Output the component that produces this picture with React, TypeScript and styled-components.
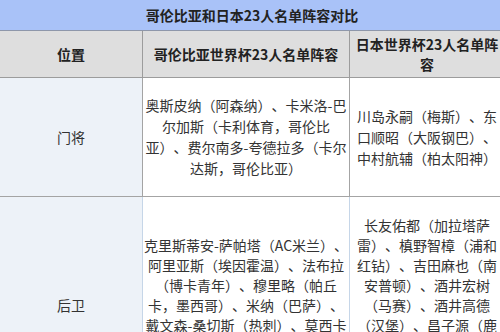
import React from "react";
import styled, { createGlobalStyle } from "styled-components";

const GlobalStyle = createGlobalStyle`
  html, body {
    margin: 0;
    padding: 0;
    background: #ffffff;
    overflow: hidden;
  }
  body {
    width: 500px;
    height: 332px;
    font-family: "Noto Sans CJK SC", "Noto Sans", sans-serif;
    color: #333;
    text-spacing-trim: space-all;
  }
`;

const rows = [
  {
    pos: "门将",
    col: "奥斯皮纳（阿森纳）、卡米洛-巴尔加斯（卡利体育，哥伦比亚）、费尔南多-夸德拉多（卡尔达斯，哥伦比亚）",
    jpn: "川岛永嗣（梅斯）、东口顺昭（大阪钢巴）、中村航辅（柏太阳神）",
    lh: 21,
    pad: 17,
    light: false,
  },
  {
    pos: "后卫",
    col: "克里斯蒂安-萨帕塔（AC米兰）、阿里亚斯（埃因霍温）、法布拉（博卡青年）、穆里略（帕丘卡，墨西哥）、米纳（巴萨）、戴文森-桑切斯（热刺）、莫西卡（赫罗纳）、法里德-迪亚斯（奥林匹亚）",
    jpn: "长友佑都（加拉塔萨雷）、槙野智樟（浦和红钻）、吉田麻也（南安普顿）、酒井宏树（马赛）、酒井高德（汉堡）、昌子源（鹿岛鹿角）、远藤航（浦和红钻）、植田直通（鹿岛鹿角）",
    lh: 20,
    pad: 18,
    light: true,
  },
];

export default function App() {
  return (
    <>
      <GlobalStyle />
      <Wrapper>
        <Title>哥伦比亚和日本23人名单阵容对比</Title>
        <Table>
          <colgroup>
            <col style={{ width: 143 }} />
            <col style={{ width: 207 }} />
            <col style={{ width: 154 }} />
          </colgroup>
          <thead>
            <tr>
              <Head>位置</Head>
              <Head>哥伦比亚世界杯23人名单阵容</Head>
              <Head>日本世界杯23人名单阵容</Head>
            </tr>
          </thead>
          <tbody>
            {rows.map((r) => (
              <tr key={r.pos}>
                <PosCell $light={r.light}>{r.pos}</PosCell>
                <Cell $lh={r.lh} $pad={r.pad} $side={0} $light={r.light}>
                  {r.col}
                </Cell>
                <Cell $lh={r.lh} $pad={r.pad} $side={2} $light={r.light}>
                  {r.jpn}
                </Cell>
              </tr>
            ))}
          </tbody>
        </Table>
      </Wrapper>
    </>
  );
}

const Wrapper = styled.div`
  width: 504px;
`;

const Title = styled.div`
  height: 30px;
  line-height: 30px;
  background: #a9c2f8;
  border-bottom: 1px solid #8e97aa;
  text-align: center;
  font-size: 14px;
  font-weight: 700;
  color: #222;
`;

const Table = styled.table`
  width: 504px;
  table-layout: fixed;
  border-collapse: separate;
  border-spacing: 0;
  font-size: 14px;
`;

const Head = styled.th`
  background: #dedede;
  padding: 3px 2px;
  line-height: 20px;
  font-weight: 700;
  font-size: 14px;
  color: #222;
  text-align: center;
  vertical-align: middle;
  border-bottom: 1px solid #9c9c9c;
  border-right: 1px solid #9c9c9c;
  &:last-child {
    border-right: none;
  }
`;

const Cell = styled.td<{ $lh: number; $pad: number; $side?: number; $light: boolean }>`
  padding: ${(p) => p.$pad}px ${(p) => p.$side ?? 2}px;
  line-height: ${(p) => p.$lh}px;
  text-align: center;
  vertical-align: middle;
  color: #333;
  border-bottom: 1px solid #a4a4a4;
  border-right: 1px solid ${(p) => (p.$light ? "#c6d6e8" : "#a4a4a4")};
  &:last-child {
    border-right: none;
  }
`;

const PosCell = styled(Cell).attrs({ $lh: 21, $pad: 0 })`
  background: #edf2f8;
`;
